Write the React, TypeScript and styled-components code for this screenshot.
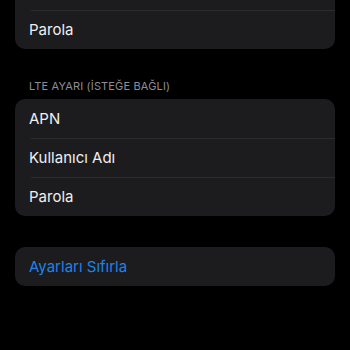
import React from 'react';
import styled, { createGlobalStyle } from 'styled-components';

const GlobalStyle = createGlobalStyle`
  html, body {
    margin: 0;
    padding: 0;
    background: #000;
    overflow: hidden;
  }
  body {
    font-family: Inter, "Liberation Sans", sans-serif;
    -webkit-font-smoothing: antialiased;
  }
`;

const Page = styled.div`
  width: 350px;
  height: 350px;
  overflow: hidden;
  background: #000;
`;

// scrolled list: the first group starts above the top edge
const Scroller = styled.div`
  display: flex;
  flex-direction: column;
  padding: 0 15px;
  margin-top: -20px;
`;

const Group = styled.section<{ $gap: number }>`
  display: flex;
  flex-direction: column;
  margin-top: ${p => p.$gap}px;
`;

const GroupHeader = styled.div`
  color: #8d8d93;
  font-size: 11px;
  letter-spacing: 0.15px;
  line-height: 14px;
  padding: 0 0 6px 14px;
  text-transform: uppercase;
`;

const Card = styled.div`
  background: #1c1c1e;
  border-radius: 10px;
  overflow: hidden;
`;

// the part of a row that has scrolled out of view
const RowTail = styled.div`
  height: 30px;
`;

const Row = styled.div<{ $accent?: boolean }>`
  height: 39px;
  display: flex;
  align-items: center;
  padding-left: 14px;
  font-size: 15px;
  color: ${p => (p.$accent ? '#1d83ec' : '#efeff1')};
  position: relative;

  ${RowTail} + &::before,
  & + &::before {
    content: '';
    position: absolute;
    top: 0;
    left: 16px;
    right: 0;
    height: 1px;
    background: #2c2c2f;
  }
`;

const groups = [
  { header: null, gap: 0, clipped: true, rows: ['Parola'] },
  { header: 'LTE AYARI (İSTEĞE BAĞLI)', gap: 30, clipped: false, rows: ['APN', 'Kullanıcı Adı', 'Parola'] },
];

export default function App() {
  return (
    <Page>
      <GlobalStyle />
      <Scroller>
        {groups.map((g, i) => (
          <Group key={i} $gap={g.gap}>
            {g.header && <GroupHeader>{g.header}</GroupHeader>}
            <Card>
              {g.clipped && <RowTail />}
              {g.rows.map(r => (
                <Row key={r}>{r}</Row>
              ))}
            </Card>
          </Group>
        ))}
        <Group $gap={31}>
          <Card>
            <Row $accent>Ayarları Sıfırla</Row>
          </Card>
        </Group>
      </Scroller>
    </Page>
  );
}
